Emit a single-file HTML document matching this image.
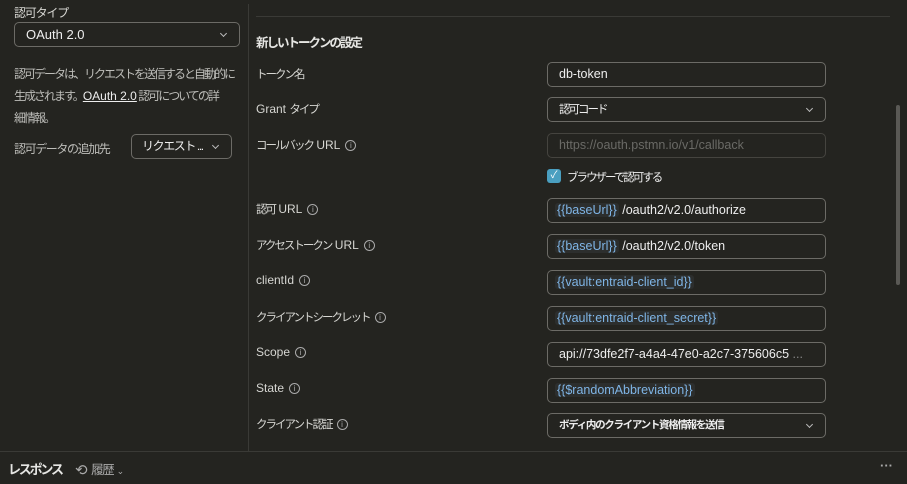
<!DOCTYPE html>
<html><head><meta charset="utf-8"><style>
*{box-sizing:border-box;margin:0;padding:0}
body{width:907px;height:484px;background:#242420;color:#e6e6e3;font-family:"Liberation Sans","Noto Sans CJK JP",sans-serif;font-size:12px;position:relative;overflow:hidden}
.a{position:absolute;white-space:nowrap}
.lbl{color:#d6d6d2;font-size:12px}
.j{font-size:11.5px;letter-spacing:-2px}
.box{position:absolute;border:1px solid #6c6b66;border-radius:5px;height:25px;padding-left:11px;line-height:23px;font-size:12.5px;color:#eee;white-space:nowrap;overflow:hidden}
.in{left:547px;width:279px}
.v{color:#7fb5e6;background:#2c2e2d;border-radius:3px;padding:0 2px;margin-left:-4px}
.chev{position:absolute;right:13px;top:8px;width:5px;height:5px;border-right:1.2px solid #bbb;border-bottom:1.2px solid #bbb;transform:rotate(45deg)}
.i{display:inline-block;width:11px;height:11px;border:1px solid #aaa;border-radius:50%;font-size:8px;line-height:9px;text-align:center;color:#aaa;margin-left:5px;vertical-align:1px;letter-spacing:0}
</style></head><body>
<div class="a lbl" style="left:14px;top:4px;letter-spacing:-1.2px">認可タイプ</div>
<div class="box" style="left:14px;top:22px;width:226px;height:25px;font-size:13px">OAuth 2.0<span class="chev"></span></div>
<div class="a" style="left:14px;top:63px;line-height:22px;color:#bdbdb9;font-size:12px;letter-spacing:-2px">認可データは、リクエストを送信すると自動的に<br>生成されます。<u style="color:#eee;letter-spacing:0">OAuth 2.0</u> 認可についての詳<br>細情報。</div>
<div class="a lbl" style="left:14px;top:140px;color:#bdbdb9;letter-spacing:-1.4px">認可データの追加先</div>
<div class="box" style="left:131px;top:134px;width:101px;height:25px;font-size:12px;padding-left:10px;letter-spacing:-1.4px">リクエスト ...<span class="chev"></span></div>
<div class="a" style="left:248px;top:4px;width:1px;height:447px;background:#3a3a36"></div>
<div class="a" style="left:256px;top:16px;width:634px;height:1px;background:#3a3a36"></div>
<div class="a" style="left:256px;top:32px;font-weight:bold;font-size:12.5px;letter-spacing:-2px">新しいトークンの設定</div>
<div class="a lbl" style="left:256px;top:66px"><span class="j">トークン名</span></div>
<div class="box in" style="top:62px">db-token</div>
<div class="a lbl" style="left:256px;top:101px">Grant <span class="j">タイプ</span></div>
<div class="box in" style="top:97px;font-size:12px"><span class="j">認可コード</span><span class="chev"></span></div>
<div class="a lbl" style="left:256px;top:137px"><span class="j">コールバック</span> URL<span class="i">i</span></div>
<div class="box in" style="top:133px;color:#6a6a66;border-color:#45443f">https://oauth.pstmn.io/v1/callback</div>
<div class="a" style="left:547px;top:169px;width:14px;height:14px;background:#4a9fc0;border-radius:3px;color:#fff;font-size:10px;text-align:center;line-height:14px">✓</div>
<div class="a lbl" style="left:567px;top:169px;color:#eee"><span class="j">ブラウザーで認可する</span></div>
<div class="a lbl" style="left:256px;top:201px"><span class="j">認可</span> URL<span class="i">i</span></div>
<div class="box in" style="top:198px"><span class="v">{{baseUrl}}</span> /oauth2/v2.0/authorize</div>
<div class="a lbl" style="left:256px;top:237px"><span class="j">アクセストークン</span> URL<span class="i">i</span></div>
<div class="box in" style="top:234px"><span class="v">{{baseUrl}}</span> /oauth2/v2.0/token</div>
<div class="a lbl" style="left:256px;top:273px">clientId<span class="i">i</span></div>
<div class="box in" style="top:270px"><span class="v">{{vault:entraid-client_id}}</span></div>
<div class="a lbl" style="left:256px;top:309px"><span class="j">クライアントシークレット</span><span class="i">i</span></div>
<div class="box in" style="top:306px"><span class="v">{{vault:entraid-client_secret}}</span></div>
<div class="a lbl" style="left:256px;top:345px">Scope<span class="i">i</span></div>
<div class="box in" style="top:342px">api://73dfe2f7-a4a4-47e0-a2c7-375606c5 <span style="color:#888">...</span></div>
<div class="a lbl" style="left:256px;top:381px">State<span class="i">i</span></div>
<div class="box in" style="top:378px"><span class="v">{{$randomAbbreviation}}</span></div>
<div class="a lbl" style="left:256px;top:416px"><span class="j">クライアント認証</span><span class="i">i</span></div>
<div class="box in" style="top:413px;font-size:10.5px;font-weight:bold"><span style="letter-spacing:-1.3px">ボディ内のクライアント資格情報を送信</span><span class="chev"></span></div>
<div class="a" style="left:896px;top:105px;width:4px;height:180px;background:#5a5955;border-radius:2px"></div>
<div class="a" style="left:0;top:451px;width:907px;height:1px;background:#3a3a36"></div>
<div class="a" style="left:8px;top:459px;font-weight:bold;font-size:13px;letter-spacing:-2.2px">レスポンス</div>
<div class="a" style="left:75px;top:459px;color:#aaa;font-size:12.5px"><span style="font-size:15px;vertical-align:-1px">⟲</span> <span style="letter-spacing:-1.5px">履歴</span> <span style="font-size:9px">⌄</span></div>
<div class="a" style="left:880px;top:458px;color:#aaa;font-size:13px;font-weight:bold">···</div>
</body></html>
